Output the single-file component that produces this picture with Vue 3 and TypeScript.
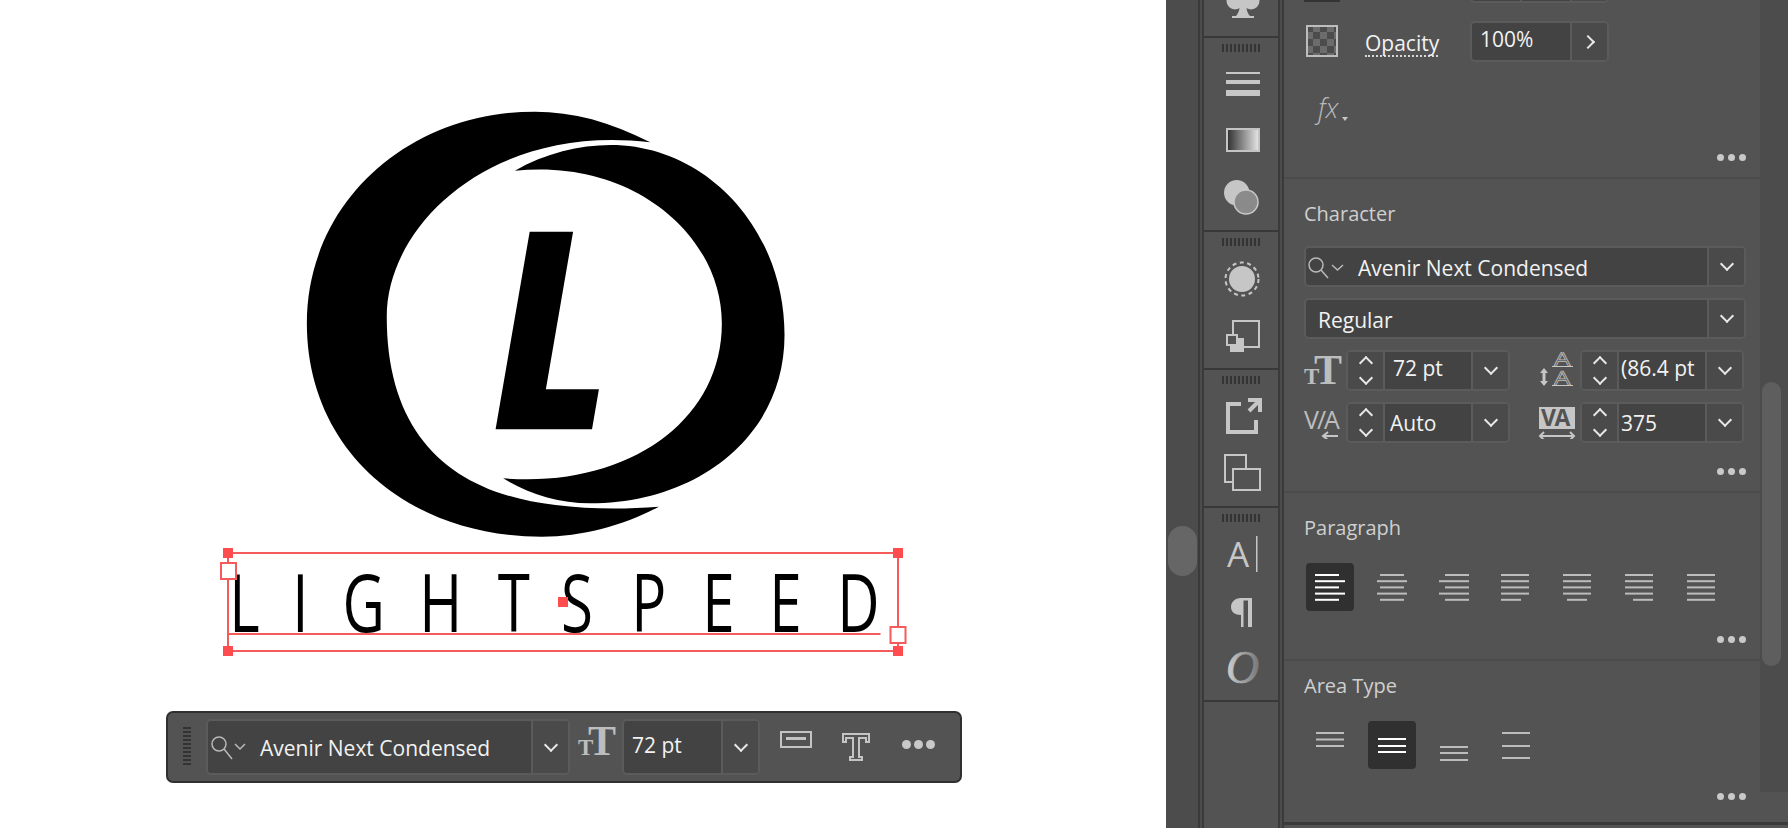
<script setup lang="ts">
const scaleX = 0.72
const fontSize = 81

// ink start of each letter in the frame, with the font's side bearing (em)
const letters = [
  { ch: 'L', ink: 15, bearing: 0.098 },
  { ch: 'I', ink: 78, bearing: 0.098 },
  { ch: 'G', ink: 126, bearing: 0.06 },
  { ch: 'H', ink: 205, bearing: 0.098 },
  { ch: 'T', ink: 279, bearing: 0.02 },
  { ch: 'S', ink: 344, bearing: 0.05 },
  { ch: 'P', ink: 417, bearing: 0.098 },
  { ch: 'E', ink: 488, bearing: 0.098 },
  { ch: 'E', ink: 555, bearing: 0.098 },
  { ch: 'D', ink: 623, bearing: 0.098 }
].map((l) => ({ ch: l.ch, x: +(l.ink / scaleX - l.bearing * fontSize).toFixed(1) }))

const paragraphIcons = [
  { rows: [[0, 24], [0, 30], [0, 24], [0, 30], [0, 24]], active: true },
  { rows: [[3, 24], [0, 30], [3, 24], [0, 30], [3, 24]], active: false },
  { rows: [[6, 24], [0, 30], [6, 24], [0, 30], [6, 24]], active: false },
  { rows: [[0, 28], [0, 28], [0, 28], [0, 28], [0, 20]], active: false },
  { rows: [[0, 28], [0, 28], [0, 28], [0, 28], [4, 20]], active: false },
  { rows: [[0, 28], [0, 28], [0, 28], [0, 28], [8, 20]], active: false },
  { rows: [[0, 28], [0, 28], [0, 28], [0, 28], [0, 28]], active: false }
]

const areaIcons = [
  { rows: [10, 16.5, 23], active: false },
  { rows: [16, 23, 29], active: true },
  { rows: [24, 30, 37], active: false },
  { rows: [10, 23, 35], active: false }
]
</script>

<template>
  <div class="screen">
    <div class="artboard">
      <svg class="logo" viewBox="0 0 1568 1380" preserveAspectRatio="none">
        <path d="M1075 157C960 95 850 65 740 65C370 65 78 340 78 700C78 1080 370 1340 760 1340C880 1340 1000 1305 1100 1250C1000 1258 900 1258 800 1245C500 1210 310 1040 310 680C310 400 620 100 1075 157Z" />
        <path d="M682 242C770 190 870 165 960 165C1240 165 1465 420 1465 735C1465 1040 1210 1240 900 1240C810 1240 720 1210 648 1165C1000 1195 1283 1000 1283 700C1283 440 1030 205 682 242Z" />
        <path d="M725 425H851L772 898H926L906 1018H626Z" />
      </svg>

      <svg class="type-frame" viewBox="0 0 700 120">
        <g transform="translate(0 90) scale(0.72 1)">
          <text v-for="(l, i) in letters" :key="i" class="wordmark" :x="l.x" y="0">{{ l.ch }}</text>
        </g>
        <g class="sel-line">
          <rect x="8" y="11" width="670" height="98" />
          <path d="M8 92H660.500" />
        </g>
        <g class="sel-handle">
          <rect x="3" y="6" width="10" height="10" />
          <rect x="673" y="6" width="10" height="10" />
          <rect x="3" y="104" width="10" height="10" />
          <rect x="673" y="104" width="10" height="10" />
          <rect x="338" y="55" width="10" height="10" />
        </g>
        <g class="sel-port">
          <rect x="1" y="21" width="15" height="16" />
          <rect x="670.500" y="85" width="15" height="16" />
        </g>
      </svg>

      <div class="float-bar">
        <div class="float-grip"></div>
        <div class="box font-box">
          <div class="value search-value">
            <svg class="search" width="36" height="24" viewBox="0 0 36 24">
              <circle cx="9" cy="8" r="7" />
              <path d="M14 13L22 23M25 8L30 13L35 8" />
            </svg>
            <span class="ui-text">Avenir Next Condensed</span>
          </div>
          <div class="drop"><i class="chev"></i></div>
        </div>
        <svg class="tt" width="38" height="30" viewBox="0 0 38 30">
          <text x="0" y="28" class="tt-small">T</text>
          <text x="10" y="28" class="tt-big">T</text>
        </svg>
        <div class="box size-box">
          <div class="value"><span class="ui-text raised">72 pt</span></div>
          <div class="drop"><i class="chev"></i></div>
        </div>
        <svg class="frame-ico" width="32" height="17" viewBox="0 0 32 17">
          <rect x="1" y="1" width="30" height="15" />
          <path d="M6 7.500H26" />
        </svg>
        <svg class="outline-t" width="28" height="28" viewBox="0 0 28 28">
          <path d="M1 1H27V9H24V5H17V24H20V27H8V24H11V5H4V9H1Z" />
        </svg>
        <div class="dots big"><i></i><i></i><i></i></div>
      </div>
    </div>

    <div class="side-track"><div class="side-thumb"></div></div>

    <div class="tools">
      <div class="tool-group g1">
        <svg width="74" height="36" viewBox="0 0 74 36">
          <circle class="solid" cx="31" cy="1" r="8.500" />
          <circle class="solid" cx="47" cy="1" r="8.500" />
          <path class="solid" d="M36 0C36 8 35 13 32 16H28V18H50V16H46C43 13 42 8 42 0Z" />
        </svg>
      </div>
      <div class="tool-group g2">
        <div class="grip"></div>
        <svg width="74" height="178" viewBox="0 0 74 178">
          <rect class="solid" x="22" y="20" width="34" height="2" />
          <rect class="solid" x="22" y="28" width="34" height="4" />
          <rect class="solid" x="22" y="38" width="34" height="6" />
          <defs>
            <linearGradient id="grad-bar">
              <stop offset="0" stop-color="#2f2f2f" />
              <stop offset="1" stop-color="#e8e8e8" />
            </linearGradient>
            <linearGradient id="grad-o" x1="0" x2="1">
              <stop offset="0" stop-color="#d0d0d0" />
              <stop offset="1" stop-color="#777" />
            </linearGradient>
          </defs>
          <rect x="23" y="77" width="32" height="22" fill="url(#grad-bar)" stroke="#c4c4c4" stroke-width="2" />
          <circle class="solid" cx="32.700" cy="140.700" r="12.700" />
          <circle cx="42" cy="150" r="12" fill="#8a8a8a" stroke="#c8c8c8" stroke-width="1.500" />
        </svg>
      </div>
      <div class="tool-group g3">
        <div class="grip"></div>
        <svg width="74" height="122" viewBox="0 0 74 122">
          <circle class="solid" cx="38" cy="33" r="13" />
          <circle class="line dashed" cx="38" cy="33" r="16.500" />
          <rect class="line" x="29" y="75" width="26" height="26" />
          <rect class="solid" x="26" y="92" width="14" height="14" />
          <rect class="line dark-fill" x="23" y="89" width="10" height="10" />
        </svg>
      </div>
      <div class="tool-group g4">
        <div class="grip"></div>
        <svg width="74" height="122" viewBox="0 0 74 122">
          <path class="line thick" d="M37 20H24V48H52V36" />
          <path class="line thick" d="M45 27L56 16M44 16H56V28" />
          <rect class="line" x="21" y="71" width="21" height="27" />
          <rect class="line panel-fill" x="29" y="85" width="27" height="21" />
        </svg>
      </div>
      <div class="tool-group g5">
        <div class="grip"></div>
        <svg width="74" height="178" viewBox="0 0 74 178">
          <text class="glyph-a" x="23" y="45">A</text>
          <rect class="solid" x="52" y="14" width="1.500" height="36" />
          <path class="solid" d="M48 76H37C31 76 27 80 27 85C27 90 31 93 37 93V105H39.500V78.500H44V105H48Z" />
          <text class="glyph-o" x="22" y="161" fill="url(#grad-o)" stroke="url(#grad-o)">O</text>
        </svg>
      </div>
      <div class="tool-group g6"></div>
    </div>

    <div class="right">
      <div class="right-main">
        <div class="panel">
          <section class="sec sec-appearance">
            <div class="clip-row">
              <div class="clip-swatch"></div>
              <div class="box clip-box"><div class="value"></div><div class="value"></div><div class="drop"></div></div>
            </div>
            <div class="opacity-row">
              <svg class="checker" width="32" height="32" viewBox="0 0 32 32">
                <defs>
                  <pattern id="check" width="14" height="14" patternUnits="userSpaceOnUse">
                    <rect width="14" height="14" fill="#6c6c6c" />
                    <rect width="7" height="7" fill="#4c4c4c" />
                    <rect x="7" y="7" width="7" height="7" fill="#4c4c4c" />
                  </pattern>
                </defs>
                <rect x="1" y="1" width="30" height="30" fill="url(#check)" stroke="#bdbdbd" stroke-width="2" />
              </svg>
              <span class="ui-text opacity-label">Opacity</span>
              <div class="box opacity-box">
                <div class="value"><span class="ui-text raised">100%</span></div>
                <div class="drop"><i class="chev right-chev"></i></div>
              </div>
            </div>
            <div class="fx">fx<i></i></div>
            <div class="dots"><i></i><i></i><i></i></div>
          </section>

          <section class="sec sec-character">
            <h3>Character</h3>
            <div class="stack">
              <div class="box wide">
                <div class="value search-value">
                  <svg class="search" width="37" height="22" viewBox="0 0 37 22">
                    <circle cx="8" cy="8" r="7" />
                    <path d="M13 13L20 21M24 8L29.500 13L35 8" />
                  </svg>
                  <span class="ui-text">Avenir Next Condensed</span>
                </div>
                <div class="drop"><i class="chev"></i></div>
              </div>
              <div class="box wide">
                <div class="value regular"><span class="ui-text">Regular</span></div>
                <div class="drop"><i class="chev"></i></div>
              </div>
              <div class="metric-grid">
                <div class="metric">
                  <svg width="38" height="30" viewBox="0 0 38 30">
                    <text x="0" y="28" class="tt-small">T</text>
                    <text x="10" y="28" class="tt-big">T</text>
                  </svg>
                  <div class="box">
                    <div class="spin"><i class="chev up"></i><i class="chev"></i></div>
                    <div class="value"><span class="ui-text raised">72 pt</span></div>
                    <div class="drop"><i class="chev"></i></div>
                  </div>
                </div>
                <div class="metric">
                  <svg width="38" height="37" viewBox="0 -3 38 37">
                    <text transform="translate(16 11) scale(1.3 1)" class="tiny-a">A</text>
                    <text transform="translate(16 30) scale(1.3 1)" class="tiny-a">A</text>
                    <path class="line thin" d="M14 11.500H35M14 30.500H35" />
                    <path class="solid" d="M6 13L10 18H7.500V26H10L6 31L2 26H4.500V18H2Z" />
                  </svg>
                  <div class="box">
                    <div class="spin"><i class="chev up"></i><i class="chev"></i></div>
                    <div class="value snug"><span class="ui-text raised">(86.4 pt</span></div>
                    <div class="drop"><i class="chev"></i></div>
                  </div>
                </div>
                <div class="metric">
                  <svg width="38" height="32" viewBox="0 0 38 32">
                    <text x="0" y="22" class="kern">V/A</text>
                    <path class="line" d="M34 29H19M24 25L19 29L24 33" />
                  </svg>
                  <div class="box">
                    <div class="spin"><i class="chev up"></i><i class="chev"></i></div>
                    <div class="value auto"><span class="ui-text">Auto</span></div>
                    <div class="drop"><i class="chev"></i></div>
                  </div>
                </div>
                <div class="metric">
                  <svg width="38" height="32" viewBox="0 0 38 32">
                    <rect class="solid" x="1" y="0" width="36" height="22" />
                    <text x="3" y="19" class="track">VA</text>
                    <path class="line" d="M2 29H36M6 25L2 29L6 33M32 25L36 29L32 33" />
                  </svg>
                  <div class="box">
                    <div class="spin"><i class="chev up"></i><i class="chev"></i></div>
                    <div class="value snug"><span class="ui-text">375</span></div>
                    <div class="drop"><i class="chev"></i></div>
                  </div>
                </div>
              </div>
            </div>
            <div class="dots"><i></i><i></i><i></i></div>
          </section>

          <section class="sec sec-paragraph">
            <h3>Paragraph</h3>
            <div class="icon-row">
              <div
                v-for="(icon, i) in paragraphIcons"
                :key="i"
                :class="['icon-btn', { active: icon.active }]"
              >
                <svg width="30" height="28" viewBox="0 0 30 28">
                  <rect
                    v-for="(row, r) in icon.rows"
                    :key="r"
                    :x="row[0]"
                    :y="1 + r * 6.200"
                    :width="row[1]"
                    height="2"
                  />
                </svg>
              </div>
            </div>
            <div class="dots"><i></i><i></i><i></i></div>
          </section>

          <section class="sec sec-area">
            <h3>Area Type</h3>
            <div class="icon-row">
              <div
                v-for="(icon, i) in areaIcons"
                :key="i"
                :class="['icon-btn', { active: icon.active }]"
              >
                <svg width="30" height="47" viewBox="0 0 30 47">
                  <rect
                    v-for="(y, r) in icon.rows"
                    :key="r"
                    x="1"
                    :y="y"
                    width="28"
                    height="2"
                  />
                </svg>
              </div>
            </div>
            <div class="dots"><i></i><i></i><i></i></div>
          </section>
        </div>
        <div class="track-col">
          <div class="track-line"><div class="thumb"></div></div>
        </div>
      </div>
      <div class="right-foot"></div>
    </div>
  </div>
</template>

<style scoped>
.screen {
  display: flex;
  width: 1788px;
  height: 828px;
  overflow: hidden;
  background: #4c4c4c;
  font-family: "Open Sans", "Noto Sans", sans-serif;
  color: #f2f2f2;
}

.artboard {
  position: relative;
  width: 1166px;
  flex: none;
  background: #fff;
}

.logo {
  position: absolute;
  left: 280px;
  top: 90px;
  width: 540px;
  height: 460px;
}

.type-frame {
  position: absolute;
  left: 220px;
  top: 542px;
  width: 700px;
  height: 120px;
}

.wordmark {
  font-family: "Open Sans", sans-serif;
  font-size: 81px;
  font-weight: 400;
  fill: #000;
}

.sel-line rect,
.sel-line path {
  fill: none;
  stroke: #f55b5b;
  stroke-width: 2;
}

.sel-handle rect {
  fill: #ff4d4f;
}

.sel-port rect {
  fill: #fff;
  stroke: #f55b5b;
  stroke-width: 2;
}

.float-bar {
  position: absolute;
  left: 166px;
  top: 711px;
  display: flex;
  align-items: flex-start;
  box-sizing: border-box;
  width: 796px;
  height: 72px;
  padding: 6px 0 0 15px;
  background: #535353;
  border: 2px solid #303030;
  border-radius: 7px;
}

.float-grip {
  width: 8px;
  height: 38px;
  margin: 8px 15px 0 0;
  background: repeating-linear-gradient(180deg, #333 0 2px, transparent 2px 4px);
}

.box {
  display: flex;
  box-sizing: border-box;
  height: 41px;
  background: #434343;
  border: 2px solid #5b5b5b;
  border-radius: 5px;
  overflow: hidden;
}

.float-bar .box {
  height: 56px;
}

.font-box {
  width: 364px;
}

.size-box {
  width: 138px;
}

.tt {
  flex: none;
  margin: 8px 6px 0 8px;
}

.value {
  flex: 1;
  display: flex;
  align-items: center;
  min-width: 0;
  padding: 0 8px;
}

.regular {
  padding-left: 12px;
}

.snug {
  padding: 0 2px;
}

.auto {
  padding: 0 5px;
}

.search-value {
  padding: 0 0 0 2px;
}

.search-value .ui-text {
  margin-top: 2px;
}

.regular .ui-text {
  margin-top: 2px;
}

.search {
  flex: none;
  fill: none;
  stroke: #b9b9b9;
  stroke-width: 1.500;
}

.float-bar .search {
  margin-top: 2px;
  margin-right: 14px;
}

.wide .search {
  margin-top: 2px;
  margin-right: 13px;
}

.ui-text {
  font-size: 21px;
  font-weight: 500;
  line-height: 24px;
  white-space: nowrap;
}

.raised {
  margin-top: -5px;
}

.drop {
  flex: none;
  display: flex;
  align-items: center;
  justify-content: center;
  box-sizing: border-box;
  width: 37px;
  background: #4a4a4a;
  border-left: 2px solid #5b5b5b;
}

.chev {
  display: block;
  width: 10px;
  height: 10px;
  margin-top: -5px;
  box-sizing: border-box;
  border-right: 2px solid #e8e8e8;
  border-bottom: 2px solid #e8e8e8;
  transform: rotate(45deg);
}

.chev.up {
  margin-top: 2px;
  margin-bottom: 3px;
  transform: rotate(225deg);
}

.right-chev {
  margin: 0 0 0 -4px;
  transform: rotate(-45deg);
}

.frame-ico {
  flex: none;
  margin: 12px 0 0 20px;
  fill: none;
  stroke: #c4c4c4;
  stroke-width: 2;
}

.frame-ico path {
  stroke-width: 3;
}

.outline-t {
  flex: none;
  margin: 14px 0 0 30px;
  fill: none;
  stroke: #c4c4c4;
  stroke-width: 2;
}

.dots {
  display: flex;
  gap: 4px;
  justify-content: flex-end;
  margin-top: auto;
}

.dots i {
  width: 7px;
  height: 7px;
  border-radius: 50%;
  background: #c9c9c9;
}

.dots.big {
  gap: 3px;
  margin: 21px 0 0 32px;
}

.dots.big i {
  width: 9px;
  height: 9px;
}

.side-track {
  width: 32px;
  flex: none;
  background: #4c4c4c;
  box-sizing: border-box;
  padding: 526px 0 0 2px;
}

.side-thumb {
  width: 29px;
  height: 50px;
  background: #666;
  border-radius: 15px;
}

.tools {
  flex: none;
  display: flex;
  flex-direction: column;
  box-sizing: border-box;
  width: 86px;
  background: #535353;
  border-left: 6px double #3a3a3a;
  border-right: 6px double #3a3a3a;
  background-clip: padding-box;
}

.tool-group {
  flex: none;
  box-sizing: content-box;
  border-bottom: 2px solid #383838;
}

.tool-group svg {
  display: block;
}

.g1 {
  height: 36px;
}

.g2 {
  height: 192px;
}

.g3 {
  height: 136px;
}

.g4 {
  height: 136px;
}

.g5 {
  height: 192px;
}

.g6 {
  flex: 1;
  border-bottom: none;
}

.grip {
  width: 38px;
  height: 8px;
  margin: 6px 0 0 18px;
  background: repeating-linear-gradient(90deg, #343434 0 2px, transparent 2px 4px);
}

.solid {
  fill: #c6c6c6;
}

.line {
  fill: none;
  stroke: #c6c6c6;
  stroke-width: 2;
}

.thick {
  stroke-width: 4;
}

.thin {
  stroke-width: 1;
}

.dashed {
  stroke-dasharray: 4 3.500;
}

.dark-fill {
  fill: #535353;
}

.panel-fill {
  fill: #535353;
}

.glyph-a {
  font-family: "Open Sans", sans-serif;
  font-size: 35px;
  font-weight: 500;
  fill: #c6c6c6;
}

.glyph-o {
  font-family: "Liberation Serif", serif;
  font-size: 46px;
  font-style: italic;
  stroke-width: 0.700;
}

.tt-small,
.tt-big {
  font-family: "Liberation Serif", serif;
  font-weight: 700;
  fill: #bdbdbd;
}

.tt-small {
  font-size: 23px;
}

.tt-big {
  font-size: 42px;
}

.tiny-a {
  font-family: "Open Sans", sans-serif;
  font-size: 20px;
  fill: none;
  stroke: #bdbdbd;
  stroke-width: 0.700;
}

.kern {
  font-family: "Open Sans", sans-serif;
  font-size: 25px;
  letter-spacing: -2px;
  fill: #bdbdbd;
}

.track {
  font-family: "Open Sans", sans-serif;
  font-size: 23px;
  font-weight: 700;
  letter-spacing: -1.500px;
  fill: #535353;
}

.right {
  flex: 1;
  display: flex;
  flex-direction: column;
  min-width: 0;
}

.right-main {
  display: flex;
  height: 822px;
}

.right-foot {
  flex: 1;
  background: #535353;
  border-top: 3px solid #3a3a3a;
}

.panel {
  width: 476px;
  flex: none;
  background: #535353;
}

.track-col {
  flex: 1;
  background: #535353;
}

.track-line {
  height: 792px;
  box-sizing: border-box;
  padding: 382px 7px 0 2px;
  background: #4c4c4c;
}

.thumb {
  height: 284px;
  background: #5e5e5e;
  border-radius: 10px;
}

.sec {
  display: flex;
  flex-direction: column;
  box-sizing: border-box;
  padding: 0 14px 16px 20px;
}

.sec + .sec {
  border-top: 2px solid #4b4b4b;
}

.sec h3 {
  margin: 0;
  font-size: 20px;
  font-weight: 500;
  line-height: 24px;
  color: #cfcfcf;
}

.sec-appearance {
  height: 177px;
}

.sec-character {
  height: 314px;
  padding-top: 23px;
}

.sec-paragraph {
  height: 168px;
  padding-top: 23px;
}

.sec-area {
  height: 157px;
  padding-top: 13px;
}

.clip-row {
  display: flex;
  margin-top: -38px;
}

.clip-swatch {
  width: 36px;
  height: 40px;
  background: #333;
}

.clip-box {
  width: 139px;
  margin-left: 130px;
}

.clip-box .value + .value {
  border-left: 2px solid #5b5b5b;
}

.opacity-row {
  display: flex;
  align-items: flex-start;
  margin-top: 18px;
}

.checker {
  flex: none;
  margin: 4px 0 0 2px;
}

.opacity-label {
  flex: none;
  width: 73px;
  margin: 10px 0 0 27px;
  line-height: 24px;
  border-bottom: 2px dotted #d8d8d8;
}

.opacity-box {
  width: 139px;
  margin-left: 32px;
}

.fx {
  position: relative;
  margin: 32px 0 0 14px;
  font-family: "Open Sans", sans-serif;
  font-size: 27px;
  font-style: italic;
  font-weight: 300;
  line-height: 28px;
  color: #b9b9b9;
}

.fx i {
  position: absolute;
  left: 24px;
  top: 23px;
  border: 3px solid transparent;
  border-top: 4px solid #c6c6c6;
}

.stack {
  display: flex;
  flex-direction: column;
  gap: 11px;
  margin-top: 20px;
}

.metric-grid {
  display: grid;
  grid-template-columns: 206px 206px;
  gap: 11px 28px;
}

.metric {
  display: flex;
  align-items: center;
}

.metric > svg {
  flex: none;
  width: 38px;
  margin-right: 4px;
}

.metric .box {
  flex: 1;
  min-width: 0;
}

.spin {
  flex: none;
  display: flex;
  flex-direction: column;
  align-items: center;
  justify-content: center;
  gap: 5px;
  box-sizing: border-box;
  width: 37px;
  background: #4a4a4a;
  border-right: 2px solid #5b5b5b;
}

.spin .chev {
  margin-top: 0;
  margin-bottom: 0;
}

.icon-row {
  display: flex;
  gap: 14px;
  margin-top: 23px;
  margin-left: 2px;
}

.icon-btn {
  display: flex;
  align-items: center;
  justify-content: center;
  width: 48px;
  height: 48px;
  border-radius: 4px;
}

.icon-btn.active {
  background: #303030;
}

.icon-btn svg {
  display: block;
  fill: #bcbcbc;
}

.icon-btn.active svg {
  fill: #fff;
}

.sec-area .icon-row {
  margin-top: 23px;
}
</style>

<style>
html,
body {
  margin: 0;
  background: #fff;
}
</style>
